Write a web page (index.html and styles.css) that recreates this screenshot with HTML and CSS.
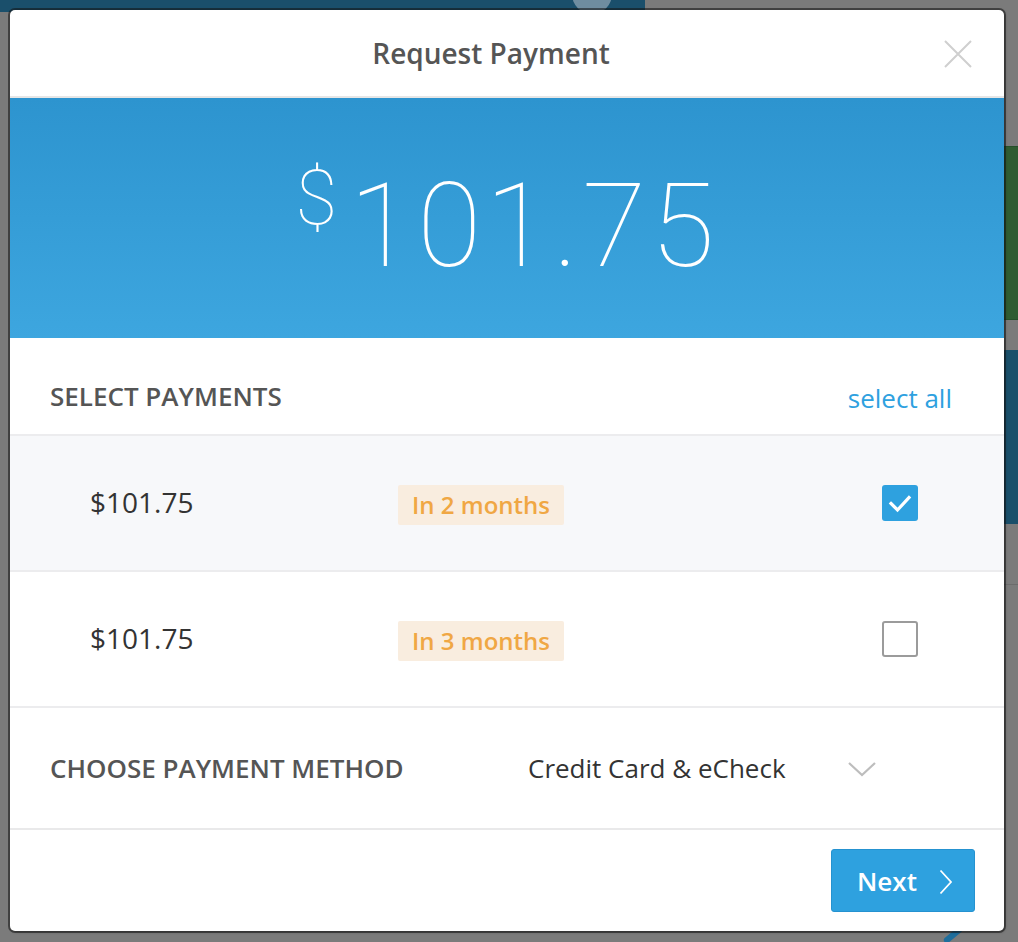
FILE: index.html
```html
<!DOCTYPE html>
<html lang="en">
<head>
<meta charset="utf-8">
<title>Request Payment</title>
<link rel="stylesheet" href="styles.css">
</head>
<body>
<div class="backdrop">
  <div class="bg-topbar"></div>
  <div class="bg-topicon"></div>
  <div class="bg-green"></div>
  <div class="bg-navy"></div>
  <div class="bg-line bg-line-a"></div>
  <div class="bg-pen"></div>
</div>
<div class="stage">
  <div class="modal">
    <header class="modal-header">
      <h1 class="modal-title">Request Payment</h1>
      <button class="close" aria-label="Close">
        <svg width="28" height="28" viewBox="0 0 28 28"><path d="M1 1 L27 27 M27 1 L1 27" stroke="#cfcfcf" stroke-width="2" fill="none"/></svg>
      </button>
    </header>
    <section class="hero">
      <span class="hero-currency">$</span><span class="hero-value">101.75</span>
    </section>
    <section class="section-head">
      <h2 class="label">SELECT PAYMENTS</h2>
      <a class="select-all">select all</a>
    </section>
    <div class="pay-row is-selected">
      <span class="pay-amount">$101.75</span>
      <span class="badge"><span>In 2 months</span></span>
      <span class="check checked">
        <svg width="36" height="36" viewBox="0 0 36 36"><path d="M9 18.5 L15.5 25 L27 12.5" stroke="#fff" stroke-width="3.2" fill="none" stroke-linecap="square"/></svg>
      </span>
    </div>
    <div class="pay-row">
      <span class="pay-amount">$101.75</span>
      <span class="badge"><span>In 3 months</span></span>
      <span class="check"></span>
    </div>
    <section class="method">
      <h2 class="label">CHOOSE PAYMENT METHOD</h2>
      <div class="method-select">
        <span class="method-value">Credit Card &amp; eCheck</span>
        <svg class="method-caret" width="28" height="16" viewBox="0 0 28 16"><path d="M1 2 L14 14 L27 2" stroke="#bdbdbd" stroke-width="2.2" fill="none"/></svg>
      </div>
    </section>
    <footer class="modal-footer">
      <button class="next">Next
        <svg width="14" height="26" viewBox="0 0 14 26"><path d="M1.5 1.5 L12 13 L1.5 24.5" stroke="#fff" stroke-width="1.8" fill="none"/></svg>
      </button>
    </footer>
  </div>
</div>
</body>
</html>
```

FILE: styles.css
```css
* { box-sizing: border-box; }

html, body {
  margin: 0;
  padding: 0;
}

body {
  width: 1018px;
  height: 942px;
  overflow: hidden;
  background: #7b7b7b;
  font-family: "Open Sans", "Liberation Sans", sans-serif;
  position: relative;
}

/* dimmed application behind the dialog */
.backdrop { position: absolute; inset: 0; }
.bg-topbar {
  position: absolute; left: 0; top: 0; width: 645px; height: 12px;
  background: #1a4f6b;
}
.bg-topicon {
  position: absolute; left: 572px; top: -26px; width: 40px; height: 40px;
  border-radius: 50%; background: #6f8da0;
}
.bg-green {
  position: absolute; left: 1000px; top: 146px; width: 18px; height: 174px;
  background: #2f5c31; border-top: 1px solid #26502a; border-bottom: 1px solid #26502a;
}
.bg-navy {
  position: absolute; left: 1000px; top: 350px; width: 18px; height: 174px;
  background: #1a4f6a;
}
.bg-line {
  position: absolute; height: 1px; background: #6c6c6c;
}
.bg-line-a { left: 1000px; top: 584px; width: 18px; }
.bg-pen {
  position: absolute; left: 942px; top: 932px; width: 22px; height: 6px;
  background: #1f6e9c; transform: rotate(-40deg); border-radius: 3px;
}

.stage {
  position: relative;
  padding: 10px 14px 11px 10px;
}

.modal {
  width: 994px;
  height: 921px;
  background: #fff;
  border-radius: 5px;
  box-shadow: 0 0 0 2px rgba(20, 20, 20, 0.55), 1px 1px 3px rgba(0,0,0,0.35);
  display: flex;
  flex-direction: column;
  overflow: hidden;
}

.modal-header {
  height: 88px;
  flex: none;
  border-bottom: 2px solid #e6e6e6;
  display: flex;
  align-items: center;
  justify-content: center;
  position: relative;
  padding-right: 32px;
}
.modal-title {
  margin: 0;
  font-size: 28px;
  font-weight: 600;
  color: #555;
  padding-top: 0;
}
.close {
  position: absolute;
  right: 32px;
  top: 30px;
  border: 0;
  background: none;
  padding: 0;
  width: 28px;
  height: 28px;
}
.close svg { display: block; }

.hero {
  height: 240px;
  flex: none;
  background: linear-gradient(180deg, #2d94cf 0%, #3da6df 100%);
  display: flex;
  justify-content: center;
  align-items: flex-start;
  color: #fff;
  font-family: Roboto, "Inter", sans-serif;
  font-weight: 100;
  padding-top: 70px;
  padding-right: 0;
}
.hero-currency {
  font-size: 76px;
  line-height: 1;
  margin-right: 12px;
  margin-top: -8px;
}
.hero-value {
  font-size: 117px;
  line-height: 1;
  letter-spacing: 4px;
}

.section-head {
  height: 98px;
  flex: none;
  border-bottom: 2px solid #ececee;
  display: flex;
  align-items: center;
  justify-content: space-between;
  padding: 20px 52px 0 40px;
}
.label {
  margin: 0;
  font-size: 26px;
  font-weight: 600;
  color: #555;
  letter-spacing: 0;
}
.select-all {
  font-size: 26px;
  color: #2ea1df;
  padding-top: 4px;
}

.pay-row {
  height: 136px;
  flex: none;
  border-bottom: 2px solid #ececee;
  display: grid;
  grid-template-columns: 308px 1fr 36px;
  align-items: center;
  padding: 0 86px 0 80px;
}
.pay-row.is-selected { background: #f7f8fa; }
.pay-amount {
  font-size: 28px;
  color: #333;
  margin-top: -2px;
}
.badge { display: flex; margin-top: 4px; }
.badge span {
  background: #f9eddf;
  color: #f0a744;
  font-size: 24px;
  font-weight: 600;
  border-radius: 2px;
  height: 40px;
  line-height: 40px;
  padding: 0 14px;
}
.check {
  width: 36px;
  height: 36px;
  border: 2px solid #9b9b9b;
  border-radius: 3px;
  background: #fff;
  display: block;
}
.check.checked {
  border: 0;
  background: #2ea1df;
}
.check svg { display: block; }

.method {
  height: 122px;
  flex: none;
  border-bottom: 2px solid #e9e9ea;
  display: grid;
  grid-template-columns: 478px 1fr;
  align-items: center;
  padding: 0 40px;
}
.method-select {
  display: flex;
  align-items: center;
}
.method-value {
  font-size: 26px;
  color: #333;
  width: 320px;
}
.method-caret { display: block; margin-top: 2px; }

.modal-footer {
  flex: 1;
  display: flex;
  justify-content: flex-end;
  align-items: flex-start;
  padding: 19px 29px 0 0;
}
.next {
  width: 144px;
  height: 63px;
  background: #2ea1df;
  border: 1px solid #2592d0;
  border-radius: 3px;
  color: #fff;
  font-family: "Open Sans", "Liberation Sans", sans-serif;
  font-size: 26px;
  font-weight: 600;
  display: flex;
  align-items: center;
  padding: 0 0 0 25px;
  gap: 22px;
}
.next svg { display: block; margin-top: 2px; }
```
